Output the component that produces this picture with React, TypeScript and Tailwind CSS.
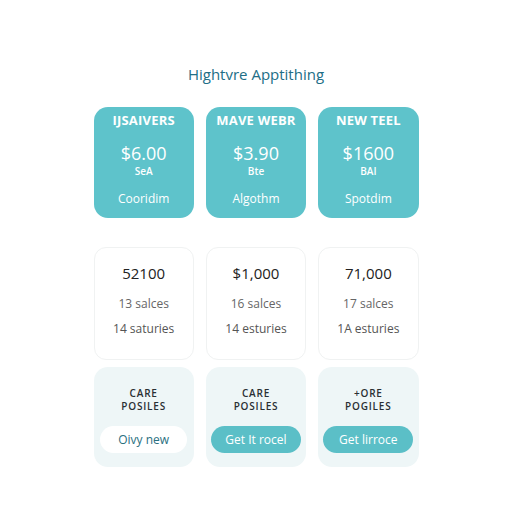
const TIERS = [
  { name: "IJSAIVERS", price: "$6.00", unit: "SeA", label: "Cooridim" },
  { name: "MAVE WEBR", price: "$3.90", unit: "Bte", label: "Algothm" },
  { name: "NEW TEEL", price: "$1600", unit: "BAI", label: "Spotdim" },
];

const STATS = [
  { total: "52100", a: "13 salces", b: "14 saturies" },
  { total: "$1,000", a: "16 salces", b: "14 esturies" },
  { total: "71,000", a: "17 salces", b: "1A esturies" },
];

const PLANS = [
  { top: "CARE", bottom: "POSILES", cta: "Oivy new", primary: false },
  { top: "CARE", bottom: "POSILES", cta: "Get It rocel", primary: true },
  { top: "+ORE", bottom: "POGILES", cta: "Get lirroce", primary: true },
];

export default function App() {
  return (
    <div
      className="min-h-screen w-full bg-white pt-[65px]"
      style={{ fontFamily: '"Open Sans", "Noto Sans", sans-serif' }}
    >
      {/* Title */}
      <h1 className="text-center text-[15px] font-medium leading-[18px] text-[#216e86]">
        Hightvre Apptithing
      </h1>

      <div className="mx-auto mt-[24px] w-[325px]">
        {/* Pricing tiers */}
        <div className="grid grid-cols-3 gap-x-[12px]">
          {TIERS.map((t) => (
            <div
              key={t.name}
              className="flex h-[111px] flex-col items-center rounded-[14px] bg-[#5ec3cb] pt-[5px] text-white"
            >
              <div className="text-[13px] font-bold leading-[16px] tracking-[0.2px]">
                {t.name}
              </div>
              <div className="mt-[14px] text-[18px] leading-[22px]">{t.price}</div>
              <div className="mt-[1px] text-[10px] font-semibold leading-[12px]">
                {t.unit}
              </div>
              <div className="mt-[14px] text-[12px] leading-[16px]">{t.label}</div>
            </div>
          ))}
        </div>

        {/* Stats */}
        <div className="mt-[29px] grid grid-cols-3 gap-x-[12px]">
          {STATS.map((s) => (
            <div
              key={s.total}
              className="flex h-[113px] flex-col items-center rounded-[12px] border border-[#f0f2f2] bg-white pt-[15px]"
            >
              <div className="text-[15px] font-medium leading-[20px] text-[#222]">
                {s.total}
              </div>
              <div className="mt-[13px] text-[12px] leading-[16px] text-[#666]">{s.a}</div>
              <div className="mt-[9px] text-[12px] leading-[16px] text-[#555]">{s.b}</div>
            </div>
          ))}
        </div>

        {/* Plans */}
        <div className="mt-[7px] grid grid-cols-3 gap-x-[12px]">
          {PLANS.map((p, i) => (
            <div
              key={i}
              className="flex h-[100px] flex-col items-center rounded-[14px] bg-[#eef6f7] pt-[20px]"
            >
              <div className="text-[10px] font-semibold leading-[13px] tracking-[0.8px] text-[#2a2f33]">
                {p.top}
              </div>
              <div className="text-[10px] font-semibold leading-[13px] tracking-[0.8px] text-[#2a2f33]">
                {p.bottom}
              </div>
              <button
                className={
                  p.primary
                    ? "mt-[13px] h-[27px] w-[90px] rounded-full bg-[#5bbfc7] text-[12px] text-white"
                    : "mt-[13px] h-[27px] w-[87px] rounded-full bg-white text-[12px] text-[#2a6f80]"
                }
              >
                {p.cta}
              </button>
            </div>
          ))}
        </div>
      </div>
    </div>
  );
}
